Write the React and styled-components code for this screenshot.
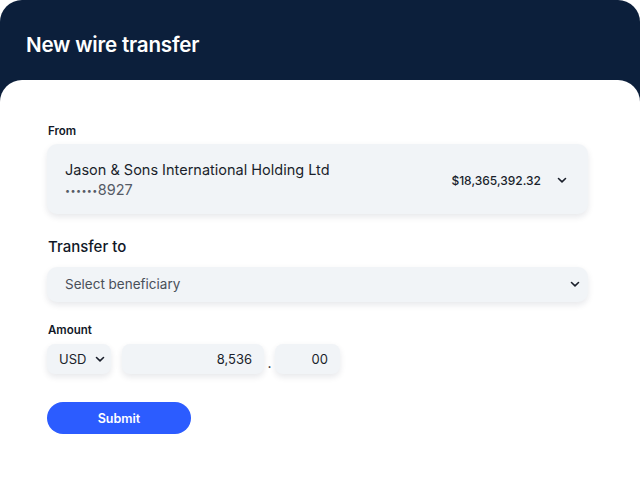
import React from "react";
import styled, { createGlobalStyle } from "styled-components";

const Global = createGlobalStyle`
  html, body { margin: 0; padding: 0; background: #ffffff; }
  body { font-family: "Inter", "Liberation Sans", sans-serif; }
  * { box-sizing: border-box; }
`;

const Frame = styled.div`
  width: 640px;
  height: 480px;
  background: #0c1f3b;
  border-radius: 22px 22px 0 0;
  display: flex;
  flex-direction: column;
  overflow: hidden;
`;

const Header = styled.header`
  height: 80px;
  flex: none;
  display: flex;
  align-items: center;
  padding: 9px 26px 0;
`;

const Title = styled.h1`
  margin: 0;
  color: #ffffff;
  font-size: 20.6px;
  font-weight: 600;
  letter-spacing: -0.2px;
`;

const Panel = styled.main`
  flex: 1;
  background: #ffffff;
  border-radius: 22px 22px 0 0;
  padding: 46px 52px 0 47px;
  display: flex;
  flex-direction: column;
`;

const Label = styled.div`
  font-size: ${(p) => (p.$big ? "15px" : "11.5px")};
  font-weight: ${(p) => (p.$big ? 500 : 600)};
  color: #111827;
  margin: 0 0 ${(p) => (p.$big ? "13px" : p.$first ? "6px" : "8px")} 1px;
  line-height: 1;
`;

const Field = styled.div`
  background: #f1f4f7;
  border-radius: 10px;
  box-shadow: 0 3px 6px rgba(15, 30, 60, 0.1);
  display: flex;
  align-items: center;
  & > svg { flex: none; }
`;

const AccountBox = styled(Field)`
  height: 70px;
  padding: 3px 21px 0 18px;
  justify-content: space-between;
  margin-bottom: 25px;
`;

const AccountInfo = styled.div`
  display: flex;
  flex-direction: column;
  gap: 1px;
`;

const AccountName = styled.div`
  font-size: 14.5px;
  color: #1a1f2b;
  font-weight: 400;
  line-height: 19px;
`;

const AccountNumber = styled.div`
  font-size: 14.5px;
  color: #555b66;
  line-height: 19px;
`;

const Mask = styled.span`
  font-size: 9px;
  letter-spacing: 0.4px;
  vertical-align: 1px;
`;

const Balance = styled.div`
  display: flex;
  align-items: center;
  gap: 16px;
  font-size: 12px;
  font-weight: 500;
  color: #1a1f2b;
  & > svg { flex: none; }
`;

const SelectBox = styled(Field)`
  height: 35px;
  padding: 0 8px 0 18px;
  justify-content: space-between;
  font-size: 13.5px;
  color: #4a505a;
  margin-bottom: 23px;
`;

const AmountRow = styled.div`
  display: flex;
  align-items: center;
`;

const Small = styled(Field)`
  height: 30px;
  width: ${(p) => p.$w}px;
  flex: none;
  padding: 0 12px;
  justify-content: ${(p) => (p.$right ? "flex-end" : "flex-start")};
  gap: 9px;
  font-size: 13px;
  color: #1a1f2b;
  border-radius: 8px;
  margin-right: ${(p) => p.$mr || 0}px;
`;

const Dot = styled.span`
  width: 11px;
  font-size: 14px;
  color: #1a1f2b;
  text-align: center;
  padding-top: 6px;
`;

const Submit = styled.button`
  margin-top: 28px;
  width: 144px;
  height: 32px;
  border: none;
  border-radius: 16px;
  background: #2c5cff;
  color: #ffffff;
  font-family: inherit;
  font-size: 12.5px;
  font-weight: 600;
`;

const Chevron = () => (
  <svg width="10" height="10" viewBox="0 0 10 10" fill="none">
    <path d="M1.5 3.5 L5 6.8 L8.5 3.5" stroke="#1a1f2b" strokeWidth="1.6" strokeLinecap="round" strokeLinejoin="round" />
  </svg>
);

export default function App() {
  return (
    <>
      <Global />
      <Frame>
        <Header>
          <Title>New wire transfer</Title>
        </Header>
        <Panel>
          <Label $first>From</Label>
          <AccountBox>
            <AccountInfo>
              <AccountName>Jason &amp; Sons International Holding Ltd</AccountName>
              <AccountNumber>
                <Mask>••••••</Mask>8927
              </AccountNumber>
            </AccountInfo>
            <Balance>
              $18,365,392.32
              <Chevron />
            </Balance>
          </AccountBox>
          <Label $big>Transfer to</Label>
          <SelectBox>
            Select beneficiary
            <Chevron />
          </SelectBox>
          <Label>Amount</Label>
          <AmountRow>
            <Small $w={64} $mr={11}>
              USD <Chevron />
            </Small>
            <Small $w={142} $right>8,536</Small>
            <Dot>.</Dot>
            <Small $w={65} $right>00</Small>
          </AmountRow>
          <div>
            <Submit>Submit</Submit>
          </div>
        </Panel>
      </Frame>
    </>
  );
}
